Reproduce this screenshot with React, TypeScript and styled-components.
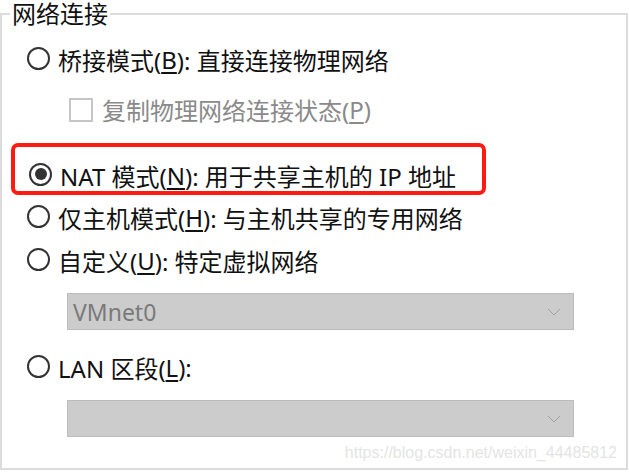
import React from 'react'
import styled, { createGlobalStyle } from 'styled-components'

const GlobalStyle = createGlobalStyle`
  html, body {
    margin: 0;
    padding: 0;
    background: #ffffff;
  }
  body {
    width: 629px;
    height: 472px;
    overflow: hidden;
    font-family: 'Noto Sans', 'Noto Sans CJK SC', sans-serif;
  }
`

const Group = styled.fieldset`
  box-sizing: border-box;
  margin: 0;
  width: 628px;
  height: 470px;
  padding: 0 0 0 25px;
  border: 2px solid #dcdcdc;
  display: flex;
  flex-direction: column;
  align-items: flex-start;
`

const Legend = styled.legend`
  margin-left: -17px;
  padding: 0 2px;
  font-size: 24px;
  line-height: 28px;
  color: #111;
`

const Row = styled.label<{ $mt?: number; $indent?: number; $disabled?: boolean }>`
  display: flex;
  align-items: center;
  height: 43px;
  margin-top: ${(p) => p.$mt ?? 0}px;
  padding-left: ${(p) => p.$indent ?? 0}px;
  font-size: 24px;
  color: ${(p) => (p.$disabled ? '#8a8a8a' : '#111')};
  white-space: nowrap;
`

const Radio = styled.span<{ $checked?: boolean }>`
  box-sizing: border-box;
  position: relative;
  flex: none;
  width: 23px;
  height: 23px;
  margin-top: -2px;
  margin-right: 8px;
  border: 2px solid #333;
  border-radius: 50%;
  background: #fff;

  &::after {
    content: '';
    display: ${(p) => (p.$checked ? 'block' : 'none')};
    position: absolute;
    left: 3.5px;
    top: 3.5px;
    width: 12px;
    height: 12px;
    border-radius: 50%;
    background: #333;
  }
`

const Check = styled.span`
  box-sizing: border-box;
  flex: none;
  width: 24px;
  height: 24px;
  margin-right: 9px;
  border: 2px solid #c6c6c6;
  background: #fff;
`

const Key = styled.span`
  text-decoration: underline;
  text-decoration-thickness: 2px;
  text-underline-offset: 3px;
`

const Highlight = styled.div`
  box-sizing: border-box;
  margin: 12px 0 0 -16px;
  width: 475px;
  height: 52px;
  padding: 12px 0 0 14px;
  border: 4px solid #ff1a12;
  border-radius: 7px;

  & > label {
    height: 32px;
  }
`

const Select = styled.div<{ $mt: number }>`
  box-sizing: border-box;
  display: flex;
  align-items: center;
  justify-content: space-between;
  margin: ${(p) => p.$mt}px 0 0 40px;
  width: 507px;
  height: 37px;
  padding: 0 12px 0 5px;
  background: #cccccc;
  border: 1px solid #bcbcbc;
  font-size: 23px;
  color: #7a7a7a;
`

const Chevron = () => (
  <svg width="14" height="8" viewBox="0 0 14 8" fill="none">
    <path d="M1 1l6 6 6-6" stroke="#a0a0a0" strokeWidth="1" />
  </svg>
)

const Watermark = styled.div`
  align-self: flex-end;
  margin: 7px 9px 0 0;
  font-family: 'Liberation Sans', Arial, sans-serif;
  font-size: 16px;
  color: #e4e4e4;
`

export default function App() {
  return (
    <>
      <GlobalStyle />
      <Group>
        <Legend>网络连接</Legend>
        <Row $mt={10}>
          <Radio />
          桥接模式(<Key>B</Key>): 直接连接物理网络
        </Row>
        <Row $mt={7} $indent={42} $disabled>
          <Check />
          复制物理网络连接状态(<Key>P</Key>)
        </Row>
        <Highlight>
          <Row>
            <Radio $checked />
            NAT 模式(<Key>N</Key>): 用于共享主机的 IP 地址
          </Row>
        </Highlight>
        <Row $mt={1}>
          <Radio />
          仅主机模式(<Key>H</Key>): 与主机共享的专用网络
        </Row>
        <Row>
          <Radio />
          自定义(<Key>U</Key>): 特定虚拟网络
        </Row>
        <Select $mt={11}>
          VMnet0
          <Chevron />
        </Select>
        <Row $mt={16}>
          <Radio />
          LAN 区段(<Key>L</Key>):
        </Row>
        <Select $mt={11}>
          <span />
          <Chevron />
        </Select>
        <Watermark>https://blog.csdn.net/weixin_44485812</Watermark>
      </Group>
    </>
  )
}
